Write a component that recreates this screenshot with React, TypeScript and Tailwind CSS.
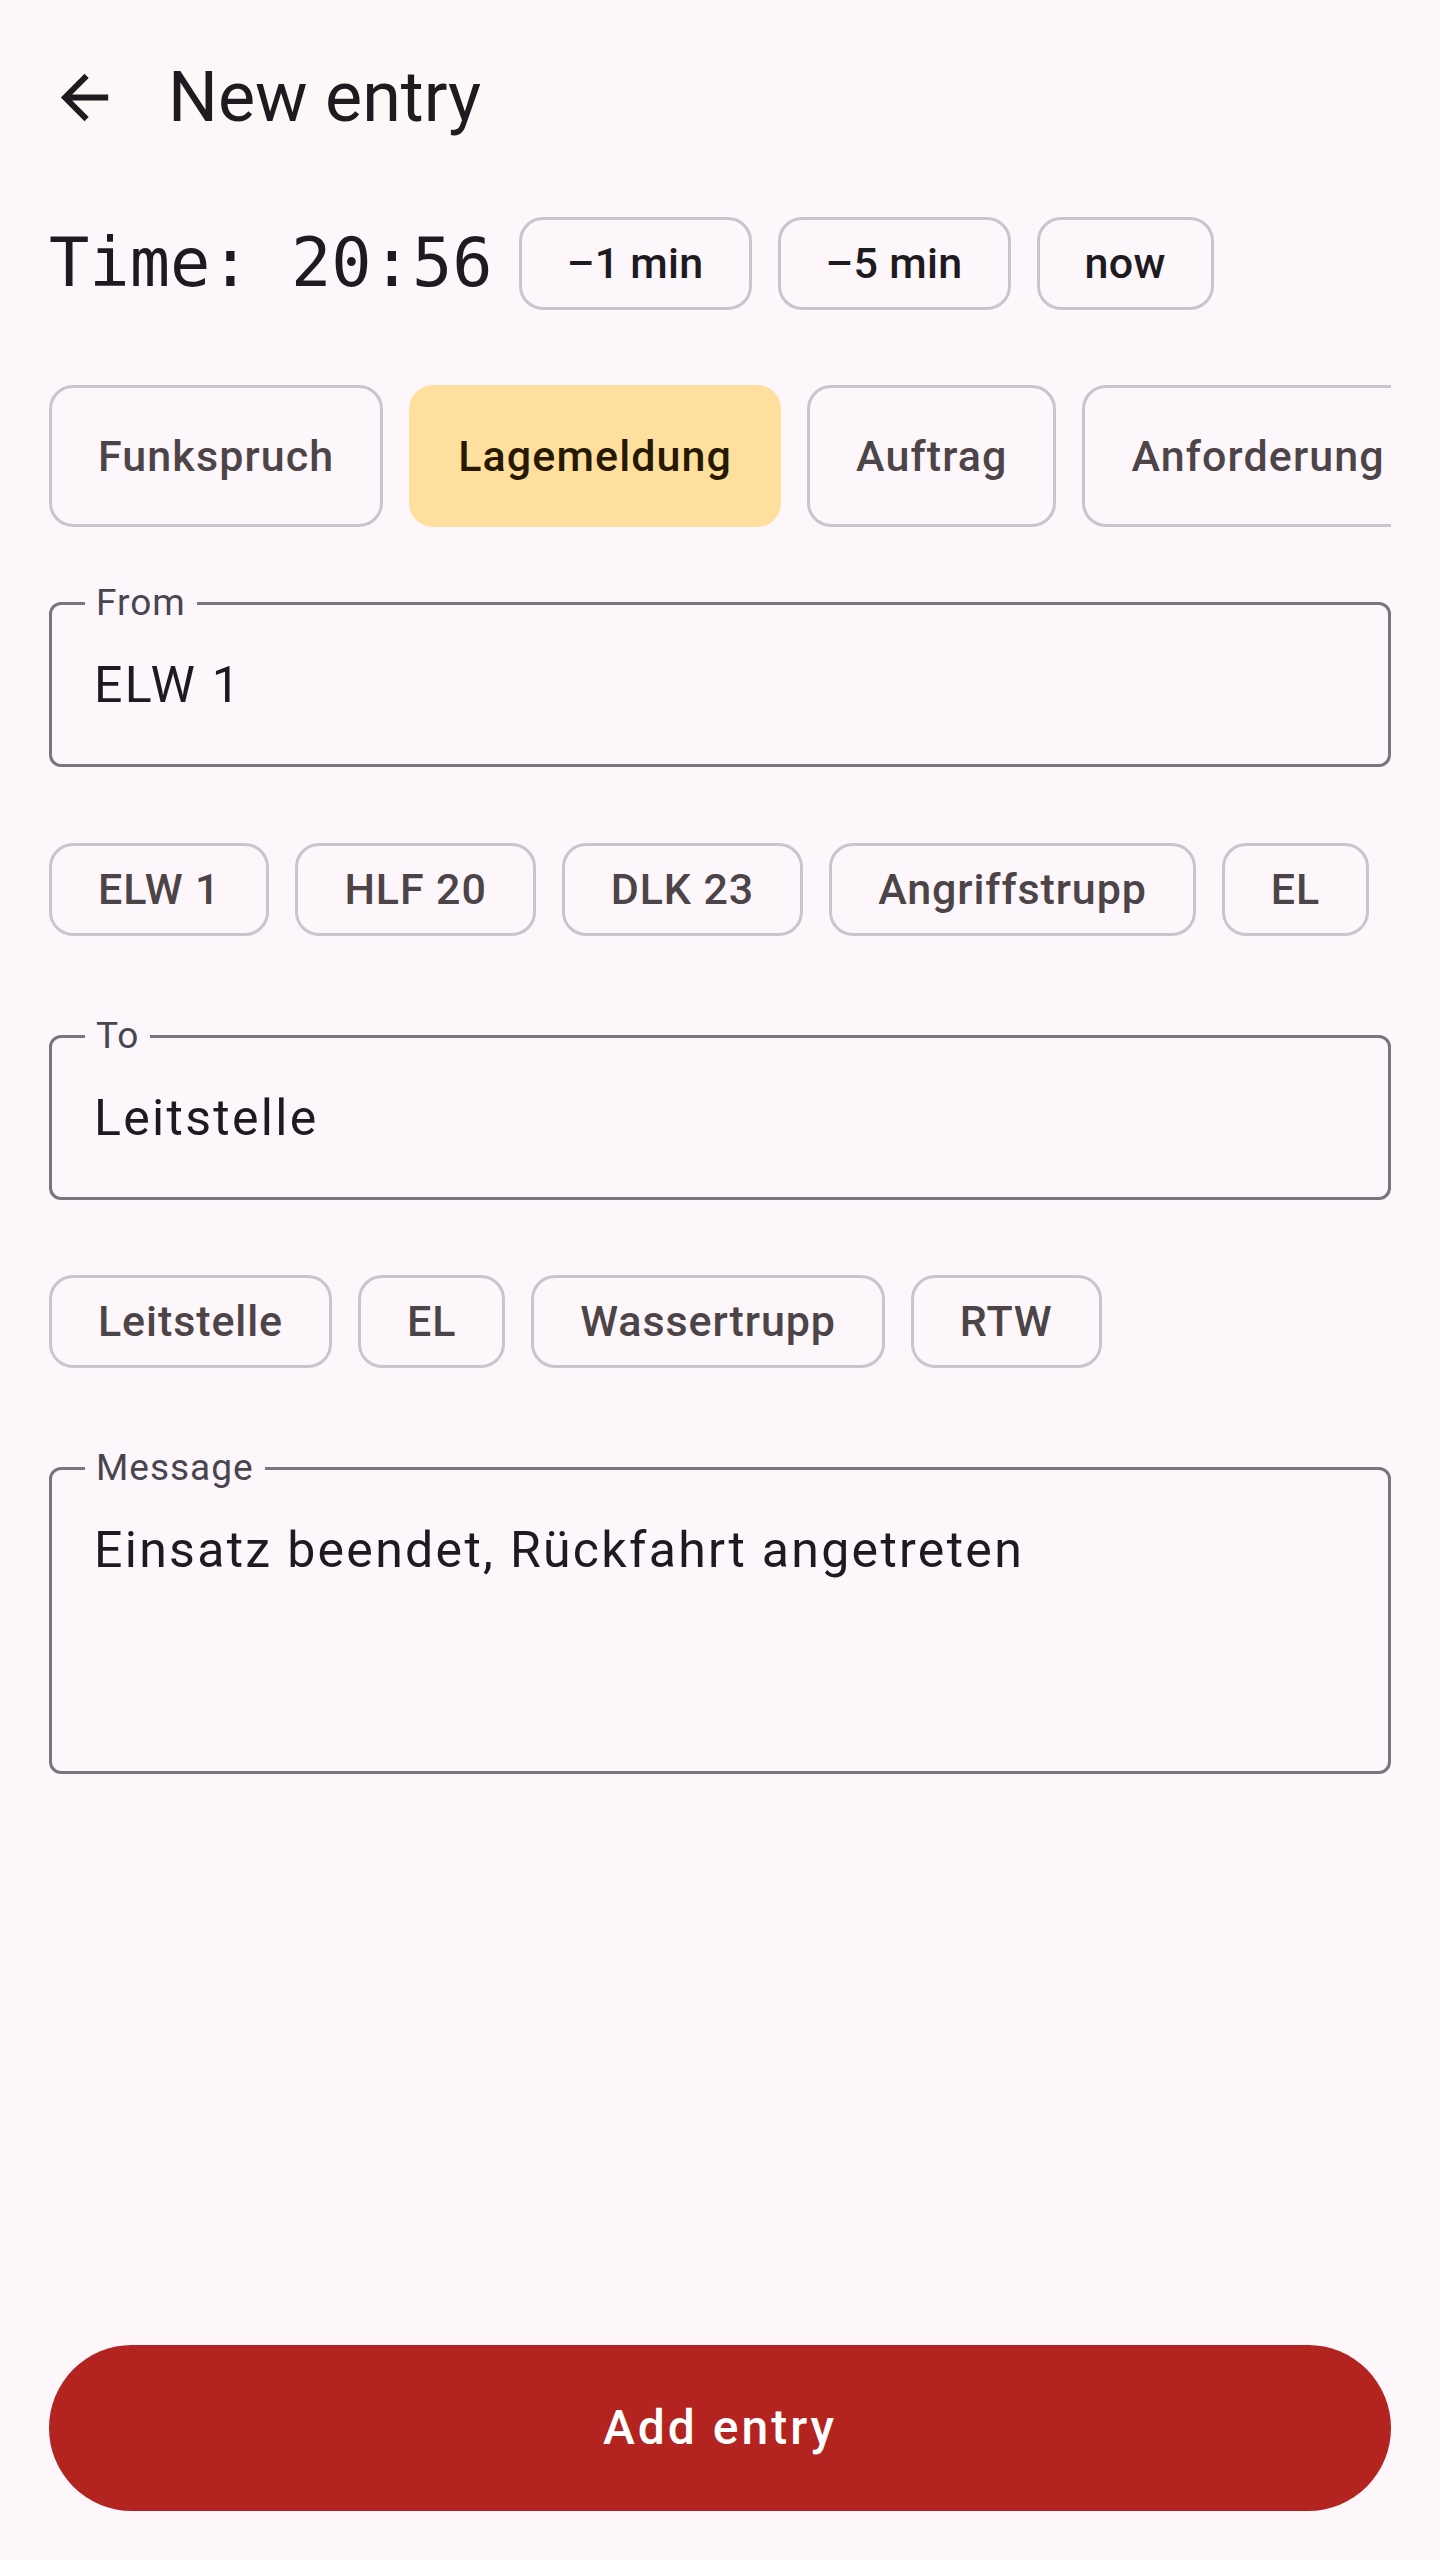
import { useState } from "react";

const entryTypes = ["Funkspruch", "Lagemeldung", "Auftrag", "Anforderung"];
const fromPresets = ["ELW 1", "HLF 20", "DLK 23", "Angriffstrupp", "EL"];
const toPresets = ["Leitstelle", "EL", "Wassertrupp", "RTW"];

const sans = "font-['Roboto','Liberation_Sans',sans-serif]";

function BackArrow() {
  return (
    <svg viewBox="0 0 24 24" className="w-[71px] h-[71px] shrink-0" fill="#1d1b20">
      <path d="M20 11H7.83l5.59-5.59L12 4l-8 8 8 8 1.41-1.41L7.83 13H20v-2z" />
    </svg>
  );
}

function Chip({ label, selected, onClick, tall }: { label: string; selected?: boolean; onClick?: () => void; tall?: boolean }) {
  return (
    <button
      onClick={onClick}
      className={`shrink-0 flex items-center px-[46px] rounded-[24px] text-[43px] font-medium leading-none ${
        tall ? "h-[142px] tracking-[1.1px]" : "h-[93px] tracking-[0.9px]"
      } ${
        selected
          ? "bg-[#ffdf9e] text-[#261900] border-[3px] border-[#ffdf9e]"
          : "border-[3px] border-[#cac4cf] text-[#4d4447]"
      }`}
    >
      {label}
    </button>
  );
}

function OutlinedField({ label, value, multiline }: { label: string; value: string; multiline?: boolean }) {
  return (
    <div
      className={`relative border-[3px] border-[#79747e] rounded-[12px] px-[42px] ${
        multiline ? "h-[307px] pt-[50px]" : "h-[165px] flex items-center"
      }`}
    >
      <span className="absolute left-[33px] -top-[2px] -translate-y-1/2 px-[11px] bg-[#fdf7fc] text-[37px] leading-[40px] tracking-[1px] text-[#49454f]">
        {label}
      </span>
      <div className="text-[50px] leading-[60px] tracking-[2.3px] text-[#1d1b20]">{value}</div>
    </div>
  );
}

export default function App() {
  const [type, setType] = useState("Lagemeldung");

  return (
    <div className={`min-h-screen flex flex-col bg-[#fdf7fc] ${sans}`}>
      {/* Top app bar */}
      <header className="h-[190px] bg-[#fbf8f7] flex items-center pl-[49px] pt-[4px] gap-[48px]">
        <BackArrow />
        <h1 className="text-[70px] leading-none text-[#1d1b20]">New entry</h1>
      </header>

      <main className="flex-1 flex flex-col px-[49px]">
        {/* Time */}
        <div className="mt-[27px] flex items-center gap-[26px]">
          <span className="font-['DejaVu_Sans_Mono','Liberation_Mono',monospace] text-[67px] leading-none text-[#1d1b20]">
            Time: 20:56
          </span>
          {["–1 min", "–5 min", "now"].map((t) => (
            <button
              key={t}
              className="h-[93px] px-[45px] rounded-[24px] border-[3px] border-[#cac4cf] text-[43px] font-medium tracking-[0.3px] leading-none text-[#1d1b20]"
            >
              {t}
            </button>
          ))}
        </div>

        {/* Entry type */}
        <div className="mt-[75px] flex gap-[26px] overflow-hidden">
          {entryTypes.map((t) => (
            <Chip key={t} label={t} tall selected={t === type} onClick={() => setType(t)} />
          ))}
        </div>

        <div className="mt-[75px]">
          <OutlinedField label="From" value="ELW 1" />
        </div>
        <div className="mt-[76px] flex gap-[26px]">
          {fromPresets.map((p) => (
            <Chip key={p} label={p} />
          ))}
        </div>

        <div className="mt-[99px]">
          <OutlinedField label="To" value="Leitstelle" />
        </div>
        <div className="mt-[75px] flex gap-[26px]">
          {toPresets.map((p) => (
            <Chip key={p} label={p} />
          ))}
        </div>

        <div className="mt-[99px]">
          <OutlinedField label="Message" value="Einsatz beendet, Rückfahrt angetreten" multiline />
        </div>

        <button className="mt-auto mb-[49px] h-[166px] rounded-full bg-[#b3231f] text-white text-[48px] font-medium tracking-[3px]">
          Add entry
        </button>
      </main>
    </div>
  );
}
